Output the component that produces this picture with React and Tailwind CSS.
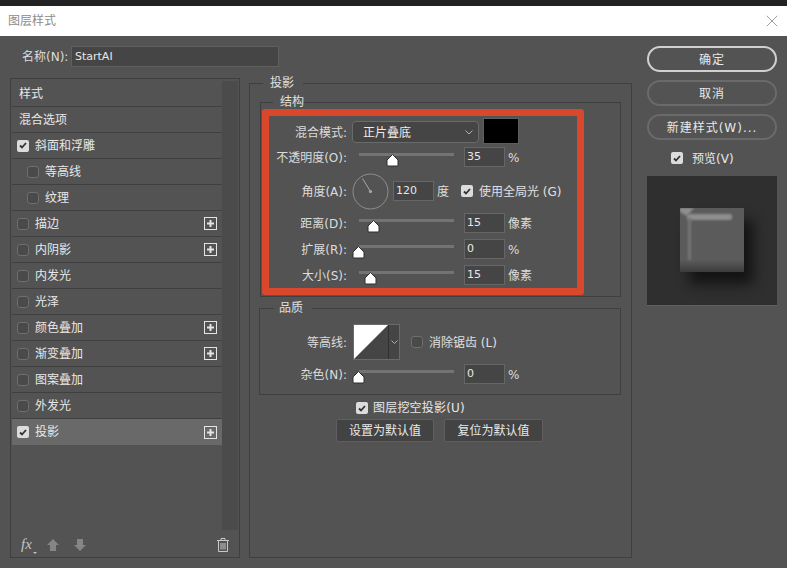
import React from "react";
import { X } from "lucide-react";

const effects = [
  { name: "样式" },
  { name: "混合选项" },
  { name: "斜面和浮雕", check: true },
  { name: "等高线", check: false, indent: true },
  { name: "纹理", check: false, indent: true },
  { name: "描边", check: false, plus: true },
  { name: "内阴影", check: false, plus: true },
  { name: "内发光", check: false },
  { name: "光泽", check: false },
  { name: "颜色叠加", check: false, plus: true },
  { name: "渐变叠加", check: false, plus: true },
  { name: "图案叠加", check: false },
  { name: "外发光", check: false },
  { name: "投影", check: true, plus: true, active: true },
];

function Checkbox({ checked }) {
  if (!checked) {
    return <span className="block w-[12px] h-[12px] shrink-0 rounded-[3px] border border-[#6e6e6e] bg-[#4a4a4a]" />;
  }
  return (
    <span className="flex items-center justify-center w-[12px] h-[12px] shrink-0 rounded-[2px] bg-[#dcdcdc]">
      <svg width="8" height="7" viewBox="0 0 8 7" fill="none">
        <path d="M1 3.5 L3 5.5 L7 1" stroke="#333" strokeWidth="1.8" />
      </svg>
    </span>
  );
}

function PlusBox() {
  return (
    <svg width="13" height="13" viewBox="0 0 13 13" className="shrink-0">
      <rect x="0.5" y="0.5" width="12" height="12" fill="none" stroke="#e4e4e4" />
      <path d="M6.5 3 V10 M3 6.5 H10" stroke="#e4e4e4" strokeWidth="2" />
    </svg>
  );
}

function EffectRow({ item }) {
  return (
    <div
      className={`flex items-center h-[26px] border-b border-[#3f3f3f] ${item.active ? "bg-[#696969] border-b-0" : ""} ${
        item.indent ? "pl-[15px]" : item.check === undefined ? "pl-[7px]" : "pl-[5px]"
      } pr-[5px]`}
    >
      {item.check !== undefined && <Checkbox checked={item.check} />}
      <span className={`text-[12px] text-[#e8e8e8] ${item.check !== undefined ? "ml-[6px]" : ""}`}>{item.name}</span>
      {item.plus && (
        <span className="ml-auto">
          <PlusBox />
        </span>
      )}
    </div>
  );
}

// thumb is the centre of the handle, counted from the left of the track
function Slider({ thumb }) {
  return (
    <div className="relative w-[112px] h-[20px] shrink-0">
      <div className="absolute top-[6px] left-[7px] w-[95px] h-[3px] bg-[#737373]" />
      <svg width="13" height="13" viewBox="0 0 13 13" className="absolute top-[7px]" style={{ left: thumb + 1 }}>
        <path d="M6.5 0.5 L12 6 V11 Q12 12 11 12 H2 Q1 12 1 11 V6 Z" fill="#fff" stroke="#2e2e2e" />
      </svg>
    </div>
  );
}

function NumberBox({ value }) {
  return (
    <div className="flex items-center w-[41px] h-[20px] pl-[2px] pt-[1px] shrink-0 bg-[#454545] border border-[#666666] text-[11px] text-[#e8e8e8]">
      {value}
    </div>
  );
}

function Label({ children }) {
  return <div className="w-[86px] shrink-0 pt-[1px] text-right text-[12px] text-[#dcdcdc]">{children}</div>;
}

function SliderRow({ label, thumb, value, unit, className = "" }) {
  return (
    <div className={`flex items-center h-[20px] ${className}`}>
      <Label>{label}</Label>
      <div className="ml-[5px]">
        <Slider thumb={thumb} />
      </div>
      <NumberBox value={value} />
      <span className="ml-[3px] pt-[1px] text-[12px] text-[#dcdcdc]">{unit}</span>
    </div>
  );
}

function PillButton({ children, strong }) {
  return (
    <button className={`flex items-center justify-center w-[130px] h-[26px] pt-[1px] rounded-[13px] border-2 text-[12px] tracking-[1px] text-[#e8e8e8] ${strong ? "border-[#d0d0d0]" : "border-[#6a6a6a]"}`}>
      {children}
    </button>
  );
}

function PreviewArt() {
  return (
    <svg width="130" height="129" viewBox="0 0 130 129" className="block">
      <defs>
        <filter id="b6" x="-50%" y="-50%" width="200%" height="200%">
          <feGaussianBlur stdDeviation="7" />
        </filter>
        <filter id="b1" x="-50%" y="-50%" width="200%" height="200%">
          <feGaussianBlur stdDeviation="1" />
        </filter>
        <linearGradient id="lower" x1="0" y1="0" x2="0" y2="1">
          <stop offset="0" stopColor="#5b5b5b" />
          <stop offset="1" stopColor="#3c3c3c" />
        </linearGradient>
        <clipPath id="sq">
          <rect x="33" y="32" width="64" height="64" />
        </clipPath>
      </defs>
      <rect width="130" height="129" fill="#2f2f2f" />
      <rect x="42" y="44" width="64" height="64" fill="#000" opacity="0.6" filter="url(#b6)" />
      <rect x="33" y="32" width="64" height="64" fill="#5b5b5b" />
      <g clipPath="url(#sq)">
        <rect x="33" y="84" width="64" height="12" fill="url(#lower)" />
        <path d="M33 32 H47 L40 40 L33 36 Z" fill="#8f8f8f" filter="url(#b1)" />
        <rect x="40" y="38" width="45" height="6" rx="2" fill="#8e8e8e" filter="url(#b1)" />
        <rect x="41" y="42" width="3" height="42" fill="#747474" filter="url(#b1)" />
      </g>
    </svg>
  );
}

export default function App() {
  return (
    <div className="w-[787px] h-[568px] overflow-hidden bg-[#535353] [font-family:'DejaVu_Sans','Noto_Sans_CJK_SC',sans-serif]">
      <div className="h-[6px] bg-[#222222]" />
      <div className="flex items-center justify-between h-[30px] bg-white pl-[8px] pr-[5px]">
        <span className="text-[12px] text-[#8c8c8c]">图层样式</span>
        <X size={20} strokeWidth={1} color="#8a8a8a" />
      </div>

      <div className="flex pl-[10px]">
        {/* left column */}
        <div className="w-[230px] shrink-0">
          <div className="flex items-center w-[269px] h-[21px] mt-[10px] pl-[12px]">
            <span className="w-[43px] pt-[1px] text-right text-[12px] text-[#dcdcdc] whitespace-nowrap">名称(N):</span>
            <div className="flex items-center w-[208px] h-[21px] shrink-0 ml-[6px] pl-[3px] pt-[1px] bg-[#454545] border border-[#5f5f5f] text-[11px] text-[#e8e8e8]">StartAI</div>
          </div>
          <div className="flex flex-col w-[230px] h-[480px] mt-[11px] pl-[1px] pr-[1px] pt-[2px] border border-[#3f3f3f]">
            <div className="flex h-[450px]">
              <div className="w-[210px]">
                {effects.map((item) => (
                  <EffectRow key={item.name} item={item} />
                ))}
              </div>
              <div className="w-[16px] bg-[#4b4b4b]" />
            </div>
            <div className="flex items-center h-[27px] pl-[9px] pr-[8px] pt-[2px]">
              <span className="flex items-end w-[20px] text-[15px] italic text-[#c4c4c4] [font-family:'Liberation_Serif',serif]">
                fx
                <svg width="4" height="2" viewBox="0 0 4 2" className="mb-[2px] ml-[1px]">
                  <path d="M0 0 H4 L2 2 Z" fill="#c4c4c4" />
                </svg>
              </span>
              <svg width="12" height="12" viewBox="0 0 12 12" className="ml-[6px]">
                <path d="M6 0 L12 6 H9 V12 H3 V6 H0 Z" fill="#858585" />
              </svg>
              <svg width="12" height="12" viewBox="0 0 12 12" className="ml-[15px]">
                <path d="M6 12 L12 6 H9 V0 H3 V6 H0 Z" fill="#858585" />
              </svg>
              <svg width="12" height="14" viewBox="0 0 12 14" fill="none" stroke="#c8c8c8" className="ml-auto mr-[1px]">
                <path d="M0 2.5 H12 M4 2.5 V0.5 H8 V2.5 M1.5 2.5 V13.5 H10.5 V2.5 M4 5 V11.5 M6 5 V11.5 M8 5 V11.5" />
              </svg>
            </div>
          </div>
        </div>

        {/* middle column */}
        <div className="w-[383px] shrink-0 ml-[9px] mt-[39px]">
          <fieldset className="h-[483px] border border-[#3f3f3f] px-[10px]">
            <legend className="ml-[3px] pl-[7px] pr-[9px] h-[16px] leading-[16px] text-[12px] text-[#e0e0e0]">投影</legend>

            <fieldset className="mt-[3px] border border-[#3f3f3f]">
              <legend className="ml-[12px] pl-[7px] h-[16px] leading-[16px] text-[12px] text-[#e0e0e0]">结构</legend>
              <div className="relative h-[186px] pt-[8px]">
                <div className="flex items-center h-[26px]">
                  <div className="mt-[2px]">
                    <Label>混合模式:</Label>
                  </div>
                  <div className="flex items-center justify-between w-[127px] h-[22px] mt-[2px] ml-[5px] pl-[10px] pr-[5px] pt-[1px] rounded-[4px] bg-[#454545] border border-[#6a6a6a] text-[12px] text-[#ededed]">
                    正片叠底
                    <svg width="8" height="5" viewBox="0 0 8 5" fill="none">
                      <path d="M0.5 0.5 L4 4 L7.5 0.5" stroke="#b0b0b0" />
                    </svg>
                  </div>
                  <div className="w-[36px] h-[26px] ml-[4px] bg-black border border-[#5e5e5e]" />
                </div>
                <SliderRow label="不透明度(O):" thumb={33} value="35" unit="%" className="mt-[3px]" />
                <div className="flex items-center h-[36px] mt-[6px]">
                  <Label>角度(A):</Label>
                  <svg width="37" height="37" viewBox="0 0 37 37" className="ml-[5px] shrink-0">
                    <circle cx="18.5" cy="18.5" r="17.5" fill="none" stroke="#8e8e8e" />
                    <path d="M18.5 18.5 L10.5 5.5" stroke="#a8a8a8" />
                    <circle cx="18.5" cy="18.5" r="1.6" fill="#a8a8a8" />
                  </svg>
                  <div className="ml-[4px]">
                    <NumberBox value="120" />
                  </div>
                  <span className="ml-[3px] pt-[1px] text-[12px] text-[#dcdcdc]">度</span>
                  <div className="ml-[12px]">
                    <Checkbox checked />
                  </div>
                  <span className="ml-[6px] pt-[1px] text-[12px] text-[#e0e0e0] whitespace-nowrap">使用全局光 (G)</span>
                </div>
                <SliderRow label="距离(D):" thumb={14} value="15" unit="像素" className="mt-[4px]" />
                <SliderRow label="扩展(R):" thumb={-1} value="0" unit="%" className="mt-[6px]" />
                <SliderRow label="大小(S):" thumb={11} value="15" unit="像素" className="mt-[6px]" />
                <div className="absolute left-[1px] top-[-1px] w-[322px] h-[186px] rounded-[3px] border-[7px] border-[#d9482d]" />
              </div>
            </fieldset>

            <fieldset className="mt-[3px] -ml-[1px] border border-[#3f3f3f]">
              <legend className="ml-[14px] pl-[5px] pr-[9px] h-[16px] leading-[16px] text-[12px] text-[#e0e0e0]">品质</legend>
              <div className="h-[78px] pt-[8px]">
                <div className="flex items-center h-[36px]">
                  <div className="w-[87px] shrink-0 pt-[1px] text-right text-[12px] text-[#dcdcdc]">等高线:</div>
                  <div className="flex h-[36px] w-[47px] ml-[6px] border border-[#6a6a6a] bg-[#454545]">
                    <svg width="34" height="34" viewBox="0 0 34 34" className="shrink-0">
                      <path d="M0 0 H34 L0 34 Z" fill="#fff" />
                    </svg>
                    <div className="flex items-center justify-center flex-1 border-l border-[#2f2f2f]">
                      <svg width="7" height="4" viewBox="0 0 7 4" fill="none">
                        <path d="M0.5 0.5 L3.5 3.5 L6.5 0.5" stroke="#b0b0b0" />
                      </svg>
                    </div>
                  </div>
                  <div className="ml-[11px]">
                    <Checkbox />
                  </div>
                  <span className="ml-[6px] pt-[1px] text-[12px] text-[#e0e0e0]">消除锯齿 (L)</span>
                </div>
                <div className="flex items-center h-[20px] mt-[4px]">
                  <div className="w-[87px] shrink-0 pt-[1px] text-right text-[12px] text-[#dcdcdc]">杂色(N):</div>
                  <div className="ml-[5px]">
                    <Slider thumb={-1} />
                  </div>
                  <NumberBox value="0" />
                  <span className="ml-[3px] pt-[1px] text-[12px] text-[#dcdcdc]">%</span>
                </div>
              </div>
            </fieldset>

            <div className="flex items-center h-[16px] mt-[5px] pl-[96px]">
              <Checkbox checked />
              <span className="ml-[5px] text-[12px] text-[#e8e8e8] tracking-[0.2px]">图层挖空投影(U)</span>
            </div>
            <div className="flex justify-center gap-[10px] mt-[3px] pr-[2px]">
              <button className="w-[98px] h-[23px] rounded-[2px] bg-[#434343] border border-[#5f5f5f] text-[12px] text-[#e8e8e8]">设置为默认值</button>
              <button className="w-[99px] h-[23px] rounded-[2px] bg-[#434343] border border-[#5f5f5f] text-[12px] text-[#e8e8e8]">复位为默认值</button>
            </div>
          </fieldset>
        </div>

        {/* right column */}
        <div className="w-[130px] shrink-0 ml-[15px] pt-[10px]">
          <div className="flex flex-col gap-[8px]">
            <PillButton strong>确定</PillButton>
            <PillButton>取消</PillButton>
            <PillButton>新建样式(W)...</PillButton>
          </div>
          <div className="flex items-center h-[16px] mt-[10px] pl-[24px]">
            <Checkbox checked />
            <span className="ml-[9px] pt-[1px] text-[12px] text-[#e8e8e8]">预览(V)</span>
          </div>
          <div className="mt-[10px] w-[130px] h-[130px] border-b border-[#616161]">
            <PreviewArt />
          </div>
        </div>
      </div>
    </div>
  );
}
